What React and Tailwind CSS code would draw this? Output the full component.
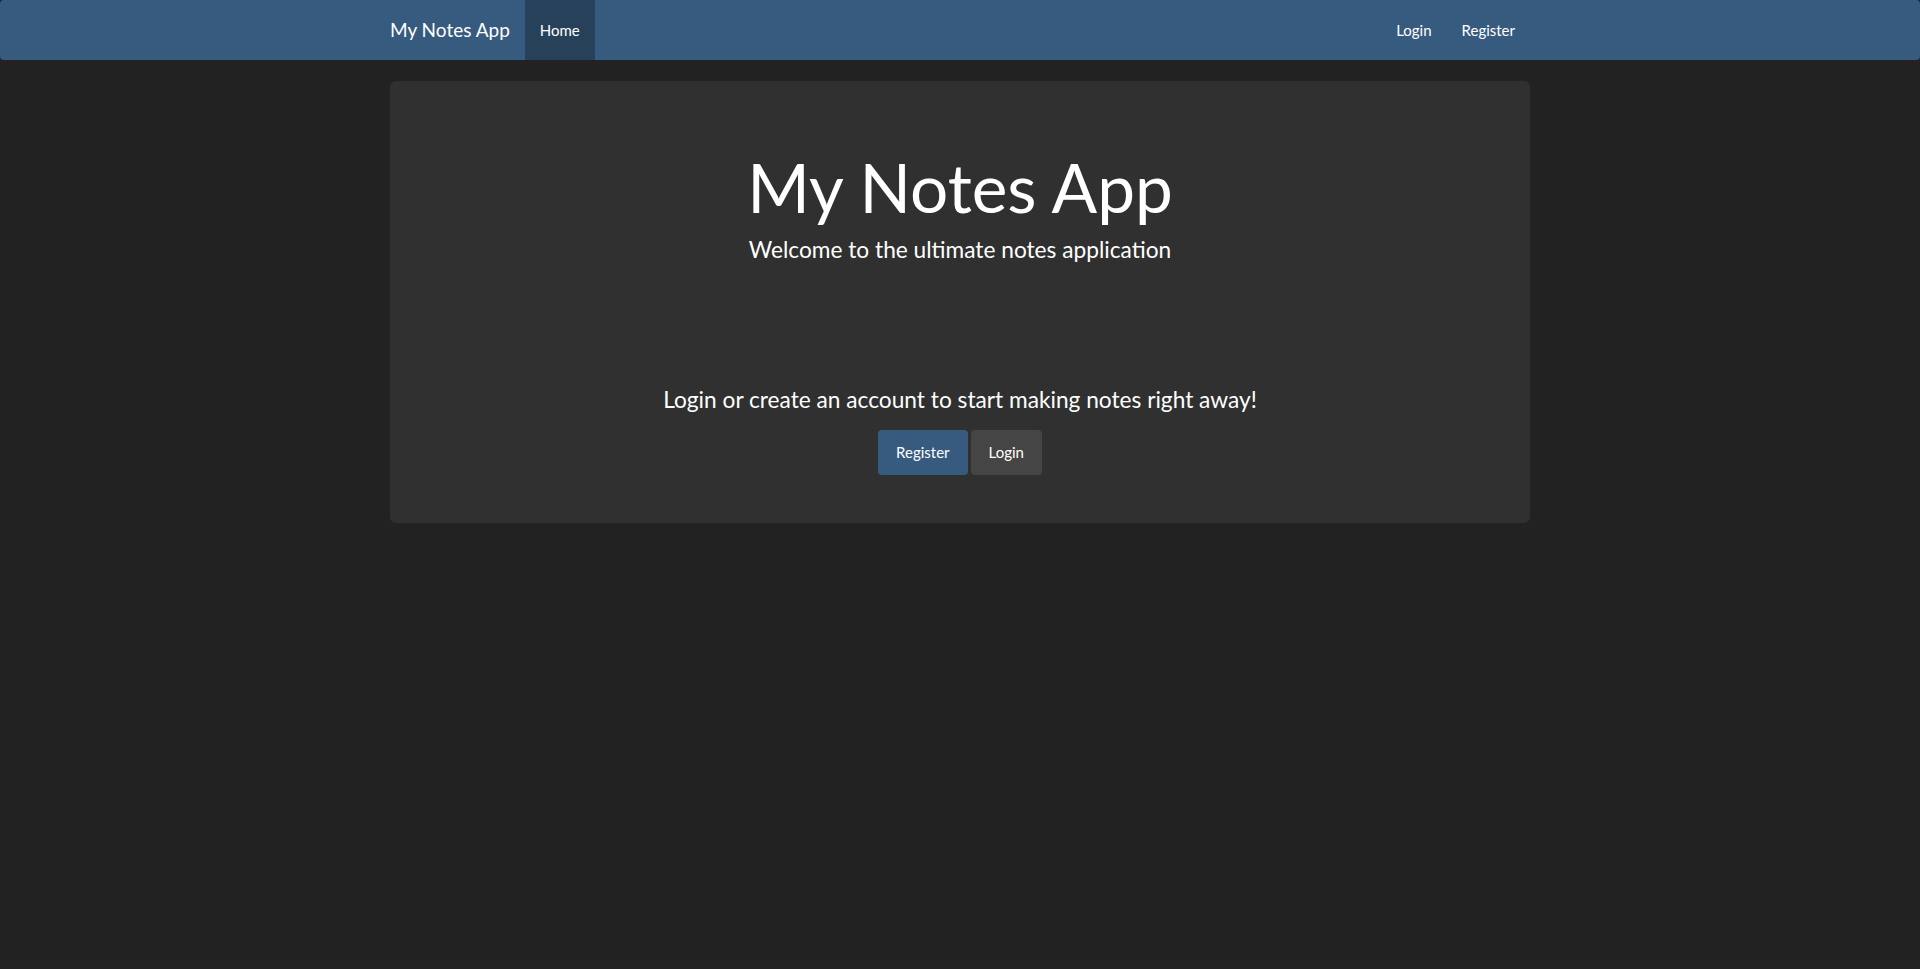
const NAV_RIGHT = [
  { label: "Login" },
  { label: "Register" },
];

const Navbar = () => (
  <nav className="h-[60px] bg-[#375a7f] rounded-[4px] mb-[21px]">
    <div className="w-[1170px] mx-auto px-[15px] h-full flex items-stretch">
      <a className="-ml-[15px] px-[15px] flex items-center text-[19px] text-white">
        My Notes App
      </a>
      <a className="px-[15px] flex items-center text-[15px] text-white bg-[#28415b]">Home</a>

      <div className="ml-auto flex items-stretch">
        {NAV_RIGHT.map((n) => (
          <a key={n.label} className="px-[15px] flex items-center text-[15px] text-white">
            {n.label}
          </a>
        ))}
      </div>
    </div>
  </nav>
);

const Jumbotron = () => (
  <div className="w-[1170px] mx-auto px-[15px]">
    <div className="bg-[#303030] rounded-[6px] pt-[48px] pb-[48px] px-[60px] text-center text-white">
      {/* ── Heading ───────────────────────────── */}
      <h1 className="mt-[21px] mb-[10px] text-[67.5px] leading-[1.1]">My Notes App</h1>
      <p className="text-[22.7px] leading-[1.42857] mb-[15px]">Welcome to the ultimate notes application</p>

      {/* ── Call to action ────────────────────── */}
      <p className="mt-[117px] text-[22.7px] leading-[1.42857] mb-[14px]">
        Login or create an account to start making notes right away!
      </p>
      <div className="flex justify-center gap-[3px]">
        <button className="h-[45px] px-[18px] rounded-[4px] bg-[#375a7f] text-white text-[15px]">
          Register
        </button>
        <button className="h-[45px] px-[18px] rounded-[4px] bg-[#464545] text-white text-[15px]">
          Login
        </button>
      </div>
    </div>
  </div>
);

export default function App() {
  return (
    <div className="min-h-screen bg-[#222222] font-['Lato','Liberation_Sans',sans-serif]">
      <Navbar />
      <Jumbotron />
    </div>
  );
}
